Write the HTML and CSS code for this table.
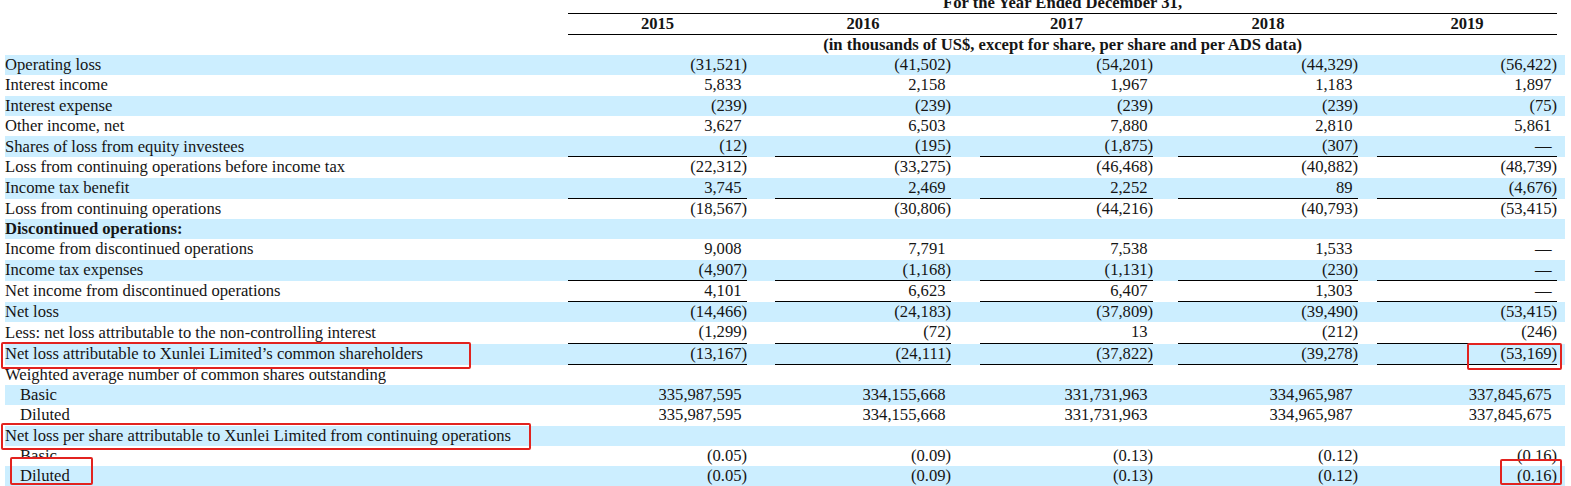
FILE: index.html
```html
<!DOCTYPE html>
<html>
<head>
<meta charset="utf-8">
<link rel="stylesheet" href="styles.css">
</head>
<body>
<div class="page">
<table class="fin">
  <colgroup>
    <col class="w-label"><col class="w-c1"><col class="w-g1"><col class="w-c2"><col class="w-g2"><col class="w-c3"><col class="w-g3"><col class="w-c4"><col class="w-g4"><col class="w-c5"><col class="w-trail">
  </colgroup>
  <thead>
    <tr class="h">
      <td></td><td colspan="9" class="hc rule">For the Year Ended December 31,</td><td></td>
    </tr>
    <tr class="h">
      <td></td>
      <td class="hc rule">2015</td><td class="rule"></td>
      <td class="hc rule">2016</td><td class="rule"></td>
      <td class="hc rule">2017</td><td class="rule"></td>
      <td class="hc rule">2018</td><td class="rule"></td>
      <td class="hc rule">2019</td><td></td>
    </tr>
    <tr class="h">
      <td></td><td colspan="9" class="hc">(in thousands of US$, except for share, per share and per ADS data)</td><td></td>
    </tr>
  </thead>
  <tbody>
    <tr class="b"><td class="l">Operating loss</td><td class="n">(31,521)</td><td></td><td class="n">(41,502)</td><td></td><td class="n">(54,201)</td><td></td><td class="n">(44,329)</td><td></td><td class="n">(56,422)</td><td></td></tr>
    <tr><td class="l">Interest income</td><td class="n p">5,833</td><td></td><td class="n p">2,158</td><td></td><td class="n p">1,967</td><td></td><td class="n p">1,183</td><td></td><td class="n p">1,897</td><td></td></tr>
    <tr class="b"><td class="l">Interest expense</td><td class="n">(239)</td><td></td><td class="n">(239)</td><td></td><td class="n">(239)</td><td></td><td class="n">(239)</td><td></td><td class="n">(75)</td><td></td></tr>
    <tr><td class="l">Other income, net</td><td class="n p">3,627</td><td></td><td class="n p">6,503</td><td></td><td class="n p">7,880</td><td></td><td class="n p">2,810</td><td></td><td class="n p">5,861</td><td></td></tr>
    <tr class="b u"><td class="l">Shares of loss from equity investees</td><td class="n">(12)</td><td></td><td class="n">(195)</td><td></td><td class="n">(1,875)</td><td></td><td class="n">(307)</td><td></td><td class="n p">—</td><td></td></tr>
    <tr><td class="l">Loss from continuing operations before income tax</td><td class="n">(22,312)</td><td></td><td class="n">(33,275)</td><td></td><td class="n">(46,468)</td><td></td><td class="n">(40,882)</td><td></td><td class="n">(48,739)</td><td></td></tr>
    <tr class="b u"><td class="l">Income tax benefit</td><td class="n p">3,745</td><td></td><td class="n p">2,469</td><td></td><td class="n p">2,252</td><td></td><td class="n p">89</td><td></td><td class="n">(4,676)</td><td></td></tr>
    <tr><td class="l">Loss from continuing operations</td><td class="n">(18,567)</td><td></td><td class="n">(30,806)</td><td></td><td class="n">(44,216)</td><td></td><td class="n">(40,793)</td><td></td><td class="n">(53,415)</td><td></td></tr>
    <tr class="b"><td class="l bold">Discontinued operations:</td><td></td><td></td><td></td><td></td><td></td><td></td><td></td><td></td><td></td><td></td></tr>
    <tr><td class="l">Income from discontinued operations</td><td class="n p">9,008</td><td></td><td class="n p">7,791</td><td></td><td class="n p">7,538</td><td></td><td class="n p">1,533</td><td></td><td class="n p">—</td><td></td></tr>
    <tr class="b u"><td class="l">Income tax expenses</td><td class="n">(4,907)</td><td></td><td class="n">(1,168)</td><td></td><td class="n">(1,131)</td><td></td><td class="n">(230)</td><td></td><td class="n p">—</td><td></td></tr>
    <tr class="u"><td class="l">Net income from discontinued operations</td><td class="n p">4,101</td><td></td><td class="n p">6,623</td><td></td><td class="n p">6,407</td><td></td><td class="n p">1,303</td><td></td><td class="n p">—</td><td></td></tr>
    <tr class="b"><td class="l">Net loss</td><td class="n">(14,466)</td><td></td><td class="n">(24,183)</td><td></td><td class="n">(37,809)</td><td></td><td class="n">(39,490)</td><td></td><td class="n">(53,415)</td><td></td></tr>
    <tr class="u"><td class="l">Less: net loss attributable to the non-controlling interest</td><td class="n">(1,299)</td><td></td><td class="n">(72)</td><td></td><td class="n p">13</td><td></td><td class="n">(212)</td><td></td><td class="n">(246)</td><td></td></tr>
    <tr class="b u"><td class="l">Net loss attributable to Xunlei Limited’s common shareholders</td><td class="n">(13,167)</td><td></td><td class="n">(24,111)</td><td></td><td class="n">(37,822)</td><td></td><td class="n">(39,278)</td><td></td><td class="n">(53,169)</td><td></td></tr>
    <tr><td class="l">Weighted average number of common shares outstanding</td><td></td><td></td><td></td><td></td><td></td><td></td><td></td><td></td><td></td><td></td></tr>
    <tr class="b"><td class="l in">Basic</td><td class="n p">335,987,595</td><td></td><td class="n p">334,155,668</td><td></td><td class="n p">331,731,963</td><td></td><td class="n p">334,965,987</td><td></td><td class="n p">337,845,675</td><td></td></tr>
    <tr><td class="l in">Diluted</td><td class="n p">335,987,595</td><td></td><td class="n p">334,155,668</td><td></td><td class="n p">331,731,963</td><td></td><td class="n p">334,965,987</td><td></td><td class="n p">337,845,675</td><td></td></tr>
    <tr class="b"><td class="l">Net loss per share attributable to Xunlei Limited from continuing operations</td><td></td><td></td><td></td><td></td><td></td><td></td><td></td><td></td><td></td><td></td></tr>
    <tr><td class="l in"><span class="clip">Basic</span></td><td class="n">(0.05)</td><td></td><td class="n">(0.09)</td><td></td><td class="n">(0.13)</td><td></td><td class="n">(0.12)</td><td></td><td class="n">(0.16)</td><td></td></tr>
    <tr class="b"><td class="l in">Diluted</td><td class="n">(0.05)</td><td></td><td class="n">(0.09)</td><td></td><td class="n">(0.13)</td><td></td><td class="n">(0.12)</td><td></td><td class="n">(0.16)</td><td></td></tr>
  </tbody>
</table>
<div class="mark m1"></div>
<div class="mark m2"></div>
<div class="mark m3"></div>
<div class="mark m4"></div>
<div class="mark m5"></div>
</div>
</body>
</html>
```
FILE: styles.css
```css
html, body {
  margin: 0;
  padding: 0;
  background: #ffffff;
}
body {
  font-family: "Liberation Serif", "Times New Roman", serif;
  font-size: 16.6px;
  color: #151515;
  overflow: hidden;
}
.page {
  position: relative;
  width: 1571px;
  height: 486px;
  overflow: hidden;
}
.fin {
  table-layout: fixed;
  border-collapse: separate;
  border-spacing: 0;
  width: 1560px;
  margin: -7px 0 0 5px;
}
.w-label { width: 563px; }
.w-c1 { width: 179px; }
.w-g1 { width: 28px; }
.w-c2 { width: 176px; }
.w-g2 { width: 29px; }
.w-c3 { width: 173px; }
.w-g3 { width: 25px; }
.w-c4 { width: 180px; }
.w-g4 { width: 19px; }
.w-c5 { width: 180px; }
.w-trail { width: 8px; }

.fin td {
  padding: 0;
  height: 20.25px;
  line-height: 20px;
  white-space: nowrap;
  vertical-align: middle;
}
.h td { height: 20px; }
.hc {
  text-align: center;
  font-weight: bold;
}
.rule { border-bottom: 1px solid #000; }

.b td { background: #cceeff; }
.u td.n { border-bottom: 1px solid #000; }

.l { text-align: left; }
.bold { font-weight: bold; }
.in { padding-left: 15px !important; }
.n { text-align: right; }
.n.p { padding-right: 0.333em !important; }

.clip {
  display: inline-block;
  height: 12px;
  overflow: hidden;
  vertical-align: top;
  line-height: 20px;
}

.mark {
  position: absolute;
  border: 2.5px solid #e2231f;
  border-radius: 2px;
  box-sizing: border-box;
}
.m1 { left: 1px; top: 342px; width: 470px; height: 27px; }
.m2 { left: 1px; top: 423px; width: 530px; height: 27px; }
.m3 { left: 10px; top: 457px; width: 83px; height: 28px; }
.m4 { left: 1467px; top: 343px; width: 95px; height: 27px; }
.m5 { left: 1500px; top: 459px; width: 62px; height: 26px; }
```
